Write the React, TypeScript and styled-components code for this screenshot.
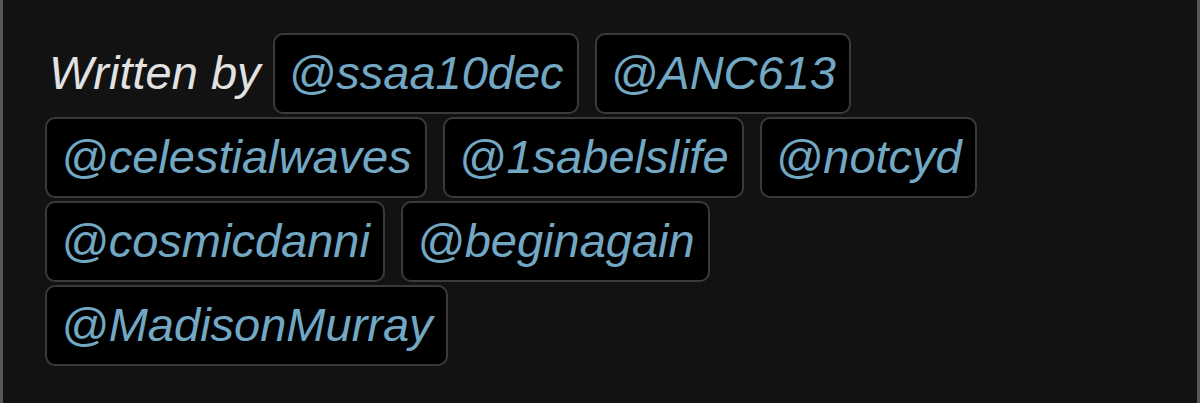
import React from "react";
import styled, { createGlobalStyle } from "styled-components";

const GlobalStyle = createGlobalStyle`
  html, body {
    margin: 0;
    padding: 0;
    background: #121212;
  }
  * { box-sizing: border-box; }
`;

const Panel = styled.div`
  width: 1200px;
  height: 403px;
  background: #121212;
  border-left: 3px solid #565656;
  border-right: 3px solid #565656;
  padding: 33px 150px 0 42px;
  font-family: "Liberation Sans", Arial, Helvetica, sans-serif;
  font-style: italic;
  font-size: 47px;
  overflow: hidden;
`;

const Credits = styled.div`
  display: flex;
  flex-wrap: wrap;
  align-items: baseline;
  column-gap: 16px;
  row-gap: 3px;
`;

const Label = styled.span`
  color: #e2e2e2;
  padding-left: 4px;
  margin-right: -4px;
  line-height: normal;
`;

const Handle = styled.span`
  display: inline-block;
  background: #000;
  color: #72a8c4;
  border: 2px solid #3a3a3a;
  border-radius: 10px;
  padding: 10px 13px 12px 14px;
  line-height: normal;
  white-space: nowrap;
`;

const authors = [
  "ssaa10dec",
  "ANC613",
  "celestialwaves",
  "1sabelslife",
  "notcyd",
  "cosmicdanni",
  "beginagain",
  "MadisonMurray",
];

export default function App() {
  return (
    <>
      <GlobalStyle />
      <Panel>
        <Credits>
          <Label>Written by</Label>
          {authors.map((a) => (
            <Handle key={a}>@{a}</Handle>
          ))}
        </Credits>
      </Panel>
    </>
  );
}
